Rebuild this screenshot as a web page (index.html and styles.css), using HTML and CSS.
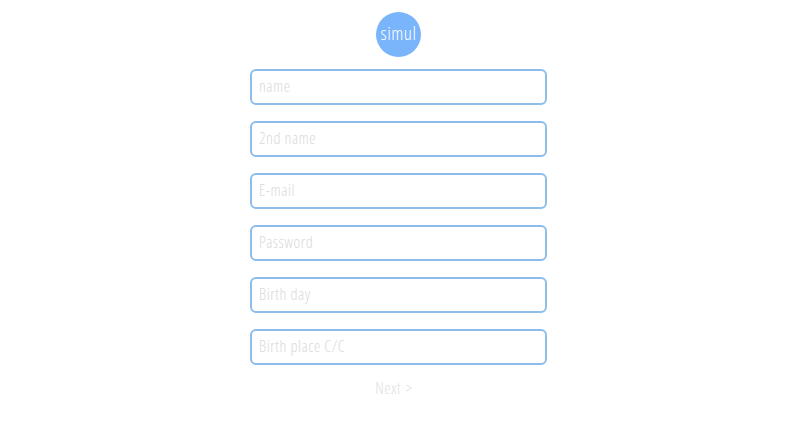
FILE: index.html
```html
<!DOCTYPE html>
<html lang="en">
<head>
<meta charset="utf-8">
<title>simul</title>
<link rel="stylesheet" href="styles.css">
</head>
<body>
<main class="page">
  <div class="logo">simul</div>
  <form class="form">
    <input class="field" type="text" placeholder="name">
    <input class="field" type="text" placeholder="2nd name">
    <input class="field" type="text" placeholder="E-mail">
    <input class="field" type="text" placeholder="Password">
    <input class="field" type="text" placeholder="Birth day">
    <input class="field" type="text" placeholder="Birth place C/C">
    <a class="next">Next &gt;</a>
  </form>
</main>
</body>
</html>
```
FILE: styles.css
```css
html, body {
  margin: 0;
  height: 100%;
  background: #fff;
}
body {
  font-family: "Open Sans", "Liberation Sans", sans-serif;
  font-weight: 300;
  font-stretch: 75%;
}
.page {
  display: flex;
  flex-direction: column;
  align-items: center;
  padding: 12px 9px 0 0;
}
.logo {
  width: 45px;
  height: 45px;
  border-radius: 50%;
  background: #7ab4fb;
  color: #fff;
  font-size: 19px;
  letter-spacing: 0.5px;
  line-height: 42px;
  text-align: center;
}
.form {
  display: flex;
  flex-direction: column;
  align-items: center;
  gap: 16px;
  margin-top: 12px;
}
.field {
  box-sizing: border-box;
  width: 297px;
  height: 36px;
  padding: 0 7px 2px;
  border: 2px solid #8dbdea;
  border-radius: 6px;
  background: #fff;
  font-family: inherit;
  font-weight: 300;
  font-stretch: 75%;
  font-size: 16px;
  letter-spacing: 0.55px;
  outline: none;
}
.field::placeholder {
  color: #d9d9db;
  opacity: 1;
}
.next {
  margin-top: -3px;
  margin-right: 9px;
  color: #dfdfe1;
  font-size: 16px;
  letter-spacing: 0.5px;
  word-spacing: 1px;
  line-height: 20px;
}
```
